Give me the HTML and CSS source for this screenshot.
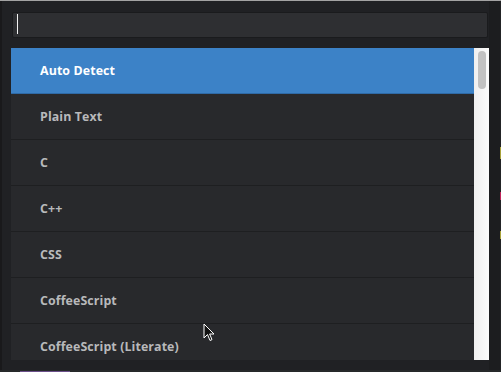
FILE: index.html
```html
<!DOCTYPE html>
<html>
<head>
<meta charset="utf-8">
<link rel="stylesheet" href="styles.css">
</head>
<body>
<div class="topline"></div>
<div class="main">
  <div class="panel">
    <div class="search"><span class="caret"></span></div>
    <div class="listwrap">
      <ul class="list">
        <li class="item selected">Auto Detect</li>
        <li class="item">Plain Text</li>
        <li class="item">C</li>
        <li class="item">C++</li>
        <li class="item">CSS</li>
        <li class="item">CoffeeScript</li>
        <li class="item">CoffeeScript (Literate)</li>
      </ul>
      <div class="scrollbar"><div class="thumb"></div></div>
    </div>
  </div>
  <div class="gutter">
    <div class="editor-edge">
      <span class="mark mark-y1"></span>
      <span class="mark mark-p"></span>
      <span class="mark mark-y2"></span>
    </div>
  </div>
</div>
<div class="bottomline"><span class="frag"></span></div>
<svg class="pointer" width="12" height="19" viewBox="0 0 12 19">
  <path d="M1 1 L1 15 L4.5 11.5 L7 17.5 L9 16.6 L6.6 11 L11 11 Z" fill="#111" stroke="#fff" stroke-width="1"/>
</svg>
</body>
</html>
```

FILE: styles.css
```css
* { box-sizing: border-box; }
html, body { margin: 0; padding: 0; }
body {
  width: 501px;
  height: 372px;
  overflow: hidden;
  background: #1c1d1f;
  font-family: "Open Sans", "DejaVu Sans", sans-serif;
  position: relative;
}
.topline { height: 1px; background: #a3a3a3; }
.main { display: flex; height: 369px; }
.panel {
  width: 489px;
  background: #202124;
  border-left: 2px solid #19191b;
  padding: 11px 0 0 9px;
  display: flex;
  flex-direction: column;
}
.search {
  height: 26px;
  margin: 0 1px 0 1px;
  background: #2e2f32;
  border: 1px solid #1a1b1d;
  border-radius: 2px;
  padding: 1px 0 0 4px;
}
.caret {
  display: block;
  width: 1px;
  height: 20px;
  background: #f2f2f2;
}
.listwrap {
  margin-top: 10px;
  display: flex;
  height: 312px;
  overflow: hidden;
}
.list {
  list-style: none;
  margin: 0;
  padding: 0;
  width: 463px;
}
.item {
  height: 46px;
  line-height: 45px;
  background: #28292c;
  border-bottom: 1px solid #1e1f21;
  color: #b8b9bb;
  font-size: 12.4px;
  font-weight: 700;
  letter-spacing: 0.1px;
  padding-left: 29px;
}
.item.selected {
  background: #3c82c7;
  border-bottom-color: #2f6aa6;
  color: #ffffff;
}
.scrollbar {
  width: 15px;
  background: linear-gradient(to right, #efefef, #fbfbfb);
  padding: 3px 0 0 4px;
}
.thumb {
  width: 8px;
  height: 38px;
  border-radius: 4px;
  background: #c2c2c2;
}
.gutter {
  width: 12px;
  display: flex;
  justify-content: flex-end;
  background: #1c1d1f;
}
.editor-edge {
  width: 1px;
  background: #222325;
  position: relative;
}
.mark { position: absolute; left: 0; width: 1px; }
.mark-y1 { top: 146px; height: 12px; background: #a8a23a; }
.mark-p { top: 191px; height: 8px; background: #c0245a; }
.mark-y2 { top: 230px; height: 8px; background: #a8a23a; }
.bottomline {
  height: 2px;
  background: #26292a;
  position: relative;
}
.frag {
  position: absolute;
  left: 20px;
  top: 1px;
  width: 50px;
  height: 1px;
  background: #6b4f8a;
}
.pointer {
  position: absolute;
  left: 203px;
  top: 323px;
}
```
